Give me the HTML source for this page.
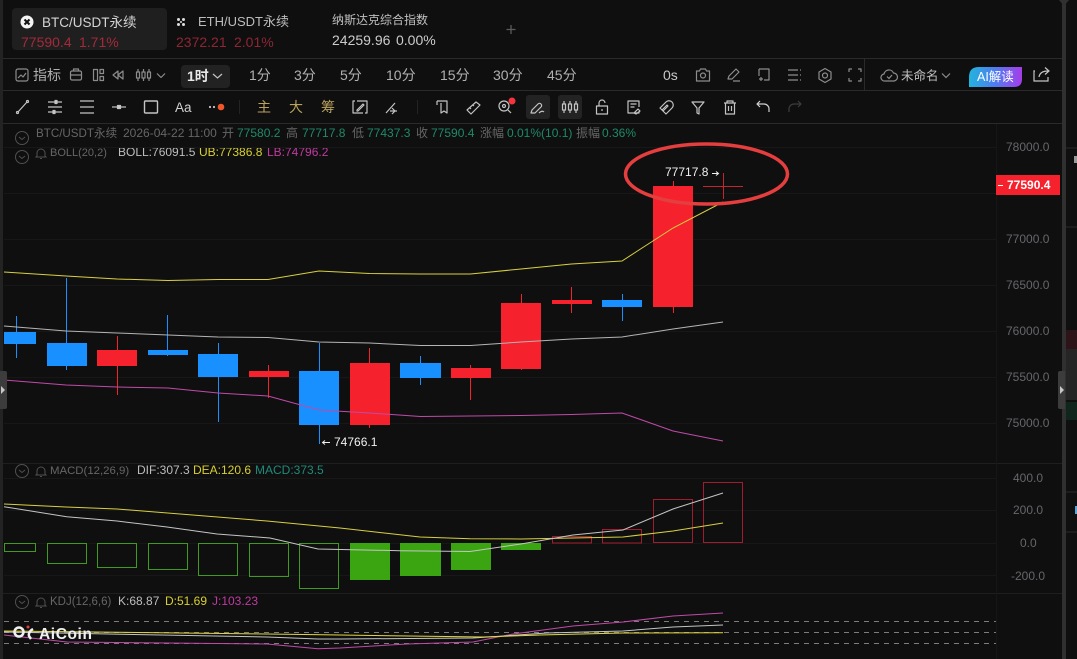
<!DOCTYPE html>
<html><head><meta charset="utf-8"><style>
html,body{margin:0;padding:0;background:#0f0f10;width:1077px;height:659px;overflow:hidden}
svg{display:block;font-family:"Liberation Sans","Noto Sans CJK SC",sans-serif}
.i{fill:none;stroke:#c4c4c4;stroke-width:1.2}
.r1{fill:none;stroke:#8c8c8c;stroke-width:1.2}
.sm{font-size:12px}
.g{fill:#666}.t{fill:#1f8a68}
.tb{font-size:14px;fill:#b0b0b0}
.ax{font-size:12px;fill:#66666b}
.ln{fill:none;stroke-width:1}
.bu{fill:#1890ff}.re{fill:#f5222d}
.wb{stroke:#1890ff;stroke-width:1}.wr{stroke:#f5222d;stroke-width:1}
.og{fill:none;stroke:#3f9a1e;stroke-width:1}
.or{fill:none;stroke:#a01c2e;stroke-width:1}
.sg{fill:#3aa510}
.gr{stroke:#171718;stroke-width:1}
.d{stroke:#7c7c7c;stroke-width:1;stroke-dasharray:5 5}
</style></head><body>
<svg width="1077" height="659" viewBox="0 0 1077 659" xmlns="http://www.w3.org/2000/svg">
<rect width="1077" height="659" fill="#0f0f10"/>
<rect x="0" y="0" width="3" height="659" fill="#232324"/>
<rect x="1062" y="0" width="4" height="659" fill="#303031"/>
<path d="M1059 0h10l-5 6z" fill="#303031"/>
<!-- right sliver -->
<path d="M1066 148h11M1066 227h11M1066 492h11M1066 532h11" stroke="#2a2a2b"/>
<rect x="1066" y="330" width="11" height="19" fill="#2c1418"/>
<rect x="1066" y="349" width="11" height="51" fill="#252526"/>
<rect x="1066" y="402" width="11" height="18" fill="#10261d"/>
<rect x="1074" y="156" width="3" height="7" fill="#999"/>
<rect x="1075" y="506" width="2" height="8" fill="#5aa4d8"/>
<!-- separators -->
<path d="M3 58.500H1062M3 90.500H1062M3 123.500H1062M864.500 58V90" stroke="#2a2a2b"/>
<path d="M3 463.500H1062M3 593.500H1062" stroke="#1f1f20"/>
<path d="M996.500 124V659" stroke="#161617"/>
<!-- tabs -->
<rect x="12" y="8" width="155" height="42" rx="4" fill="#1f1f20"/>
<circle cx="27" cy="22" r="6.500" fill="#f4f4f4"/>
<path d="M24.500 19.500l5 5M29.500 19.500l-5 5" stroke="#111" stroke-width="2"/>
<text x="42" y="27" font-size="13.500" fill="#d4d4d4">BTC/USDT永续</text>
<text x="21" y="47" font-size="14" fill="#a42a38">77590.4</text><text x="79" y="47" font-size="14" fill="#a42a38">1.71%</text>
<g fill="#ddd"><circle cx="178.500" cy="19.500" r="1.500"/><circle cx="183.500" cy="19.500" r="1.500"/><circle cx="178.500" cy="24.500" r="1.500"/><circle cx="183.500" cy="24.500" r="1.500"/><circle cx="181" cy="22" r="1"/></g>
<text x="198" y="26" font-size="13" fill="#bcbcbc">ETH/USDT永续</text>
<text x="176" y="47" font-size="14" fill="#8e2634">2372.21</text><text x="234" y="47" font-size="14" fill="#8e2634">2.01%</text>
<text x="332" y="24" font-size="12" fill="#c0c0c0">纳斯达克综合指数</text>
<text x="332" y="45" font-size="14" fill="#cccccc">24259.96</text><text x="396" y="45" font-size="14" fill="#cccccc">0.00%</text>
<path d="M511 25v9M506.500 29.500h9" stroke="#5c5c5c" stroke-width="1.300"/>
<!-- row 1 -->
<g class="r1" stroke-linejoin="round">
<rect x="16" y="69" width="12" height="12" rx="2"/><path d="M18 78l3-3 2 2 3-4"/>
<rect x="70.500" y="71" width="11" height="9" rx="1.500"/><path d="M73.500 71v-2h5v2M70.500 75h11"/>
<rect x="93.500" y="69.500" width="4" height="11"/><rect x="100" y="69.500" width="3.500" height="4"/><rect x="100" y="76.500" width="3.500" height="4"/>
<path d="M118 71l-5 4 5 4zM123 71l-5 4 5 4z"/>
<path d="M138 69v12M143.500 69v12M149 69v12"/><rect x="136.500" y="72" width="3" height="6" fill="#111"/><rect x="142" y="72" width="3" height="6" fill="#111"/><rect x="147.500" y="72" width="3" height="6" fill="#111"/>
<path d="M157 73.500l4 4 4-4"/>
</g>
<text x="33" y="80" font-size="14" fill="#b0b0b0">指标</text>
<rect x="181" y="65" width="49" height="23" rx="4" fill="#222223"/>
<text x="187" y="81" font-size="14" font-weight="bold" fill="#e8e8e8">1时</text>
<path class="i" d="M213 74l4.500 4 4.500-4"/>
<text x="249" y="80" class="tb">1分</text><text x="294" y="80" class="tb">3分</text><text x="340" y="80" class="tb">5分</text><text x="386" y="80" class="tb">10分</text><text x="440" y="80" class="tb">15分</text><text x="493" y="80" class="tb">30分</text><text x="547" y="80" class="tb">45分</text>
<text x="663" y="80" font-size="14" fill="#c8c8c8">0s</text>
<g class="r1" stroke-linejoin="round">
<path d="M696.500 71h3l1-2h5l1 2h3v10h-13z"/><circle cx="703" cy="75.500" r="2.500"/>
<path d="M728 79l1-3 7-7 3 3-7 7zM733 81h7"/>
<path d="M759 69h10v11h-5M759 69v7M759 79h4M761 77v4"/>
<path d="M788 70h10M788 75h10M788 80h10M800 70h1M800 75h1M800 80h1"/>
<path d="M825 68.500l6 3.500v7l-6 3.500-6-3.500v-7z"/><circle cx="825" cy="75.500" r="2.500"/>
<path d="M849 72v-3h3M858 69h3v3M861 78v3h-3M852 81h-3v-3"/>
</g>
<g class="r1"><path d="M885 81a3.500 3.500 0 0 1-1-7 5 5 0 0 1 9.500-1 4 4 0 0 1 0 8zM887 76.500l2 2 3-3.500"/></g>
<text x="901" y="80" font-size="12.500" fill="#c0c0c0">未命名</text>
<path class="r1" d="M942 73.500l4 4 4-4"/>
<defs><linearGradient id="ai" x1="0" x2="1" y1="0" y2="0"><stop offset="0" stop-color="#22b4dc"/><stop offset=".5" stop-color="#4f7cf0"/><stop offset="1" stop-color="#a63de8"/></linearGradient></defs>
<path d="M979 67h43v12q0 8-8 8h-45v-10q0-10 10-10z" fill="url(#ai)"/>
<text x="977" y="81" font-size="12.500" fill="#ffffff">AI解读</text>
<g class="i"><path d="M1035 71h-1v10h14v-4M1039 77q1-6 9-6M1045 67.500l4 3.500-4 3.500"/></g>
<!-- row 2 -->
<rect x="526" y="95" width="24" height="24" rx="3" fill="#232324"/>
<rect x="558" y="95" width="24" height="24" rx="3" fill="#232324"/>
<g class="i" stroke-linejoin="round">
<path d="M18 112l9-10"/><circle cx="17.500" cy="112.500" r="1"/><circle cx="27.500" cy="101.500" r="1"/>
<path d="M48 102h14M48 107h14M48 112h14"/><rect x="55" y="100.500" width="2" height="3" fill="#ccc"/><rect x="53" y="110.500" width="2" height="3" fill="#ccc"/>
<path d="M80 101h14M80 107h14M80 113h14"/>
<path d="M112 107h14"/><rect x="117.500" y="105.500" width="3" height="3" fill="#ccc"/>
<rect x="144.500" y="101" width="13" height="12" rx="1" stroke-width="1.400"/>
<circle cx="210" cy="107" r=".5"/><circle cx="214" cy="107" r=".5"/>
<path d="M355 101h-2v12h2M365 101h2v12h-2M355 113h8M357 101h8M357 110l6-6 1 1-6 6h-1z"/>
<path d="M386 113l9-10M390 111h7M392 108l3 3-3 3"/>
<path d="M437 101h10v12l-3-2-3 2v-10M437 101v4"/>
<path d="M467 110l9-8 4 3-9 9zM470 108l1 1M473 105l1 1"/>
<circle cx="504" cy="106" r="5"/><circle cx="504" cy="106" r="1.500"/><path d="M508 110l3 3"/>
<path d="M531 113l1-3 6-6a2 2 0 0 1 3 3l-6 6zM539 113q3-3 5-1"/>
<path d="M564 101v12M570 101v12M576 101v12"/><rect x="562.500" y="104" width="3" height="6" fill="#222"/><rect x="568.500" y="104" width="3" height="6" fill="#222"/><rect x="574.500" y="104" width="3" height="6" fill="#222"/>
<rect x="596.500" y="106" width="11" height="8"/><path d="M599 106v-3a3 3 0 0 1 6 0"/><path d="M602 109v2"/>
<path d="M639 112v1h-11v-12h11v6M630.500 104h6M630.500 107h4M634 113l4-4 2 2-4 3z"/>
<path d="M660 108l6-6a4 4 0 0 1 6 6l-6 6-3-3 5-5-1-1-5 5zM662 110l2 2"/>
<path d="M692 102h12l-5 6v6l-2-1v-5z"/>
<path d="M724 103h12M727 103v-2h6v2M725.500 103v11h9v-11M728.500 106v5M731.500 106v5"/>
<path d="M757 104h7a5 5 0 0 1 5 5v3M760 101l-3 3 3 3" stroke="#d0d0d0"/>
</g>
<path d="M801 104h-7a5 5 0 0 0-5 5v3M798 101l3 3-3 3" fill="none" stroke="#3c3c3d" stroke-width="1.200"/>
<text x="175" y="112" font-size="13.500" fill="#d0d0d0">Aa</text>
<circle cx="221" cy="107" r="3.300" fill="#f0562a"/>
<path d="M239.500 100v14M417.500 100v14" stroke="#232324"/>
<text x="257" y="112" font-size="14" fill="#b8a25c">主</text>
<text x="289" y="112" font-size="14" fill="#b8a25c">大</text>
<text x="321" y="112" font-size="14" fill="#b8a25c">筹</text>
<circle cx="512" cy="101" r="3.500" fill="#f5343e"/>
<!-- info lines -->
<g fill="none" stroke="#505050" stroke-width="1">
<circle cx="22" cy="138" r="6.500"/><path d="M19 137l3 2.500 3-2.500"/>
<circle cx="22" cy="157" r="6.500"/><path d="M19 156l3 2.500 3-2.500"/>
<circle cx="22" cy="471" r="6.500"/><path d="M19 470l3 2.500 3-2.500"/>
<circle cx="22" cy="602" r="6.500"/><path d="M19 601l3 2.500 3-2.500"/>
<path d="M37 156v-3a4 4 0 0 1 8 0v3l1 1h-10zM40 158.500h2"/>
<path d="M37 474v-3a4 4 0 0 1 8 0v3l1 1h-10zM40 476.500h2"/>
<path d="M37 605v-3a4 4 0 0 1 8 0v3l1 1h-10zM40 607.500h2"/>
</g>
<g class="sm">
<text x="36" y="137" font-size="11.600" class="g">BTC/USDT永续</text>
<text x="123" y="137" class="g">2026-04-22 11:00</text>
<text x="222" y="137" class="g">开</text><text x="237" y="137" class="t">77580.2</text>
<text x="286" y="137" class="g">高</text><text x="302" y="137" class="t">77717.8</text>
<text x="352" y="137" class="g">低</text><text x="367" y="137" class="t">77437.3</text>
<text x="416" y="137" class="g">收</text><text x="431" y="137" class="t">77590.4</text>
<text x="480" y="137" class="g">涨幅</text><text x="507" y="137" class="t">0.01%(10.1)</text>
<text x="576" y="137" class="g">振幅</text><text x="602" y="137" class="t">0.36%</text>
<text x="50" y="156" font-size="11" class="g">BOLL(20,2)</text>
<text x="118" y="156" fill="#bdbdbd">BOLL:76091.5</text>
<text x="199" y="156" fill="#d8d030">UB:77386.8</text>
<text x="267" y="156" fill="#c03aa0">LB:74796.2</text>
<text x="50" y="474" font-size="11.400" class="g">MACD(12,26,9)</text>
<text x="137" y="474" fill="#bdbdbd">DIF:307.3</text>
<text x="193" y="474" fill="#d8d030">DEA:120.6</text>
<text x="255" y="474" fill="#1f8a78">MACD:373.5</text>
<text x="50" y="605" font-size="11.500" class="g">KDJ(12,6,6)</text>
<text x="118" y="605" fill="#bdbdbd">K:68.87</text>
<text x="165" y="605" fill="#d8d030">D:51.69</text>
<text x="212" y="605" fill="#c03aa0">J:103.23</text>
</g>
<!-- grid -->
<path class="gr" d="M4 147.500H996M4 193.500H996M4 239.500H996M4 285.500H996M4 331.500H996M4 377.500H996M4 423.500H996M4 478.500H996M4 510.500H996M4 543.500H996M4 575.500H996"/>
<!-- axis -->
<g class="ax">
<text x="1006" y="151">78000.0</text>
<text x="1006" y="243">77000.0</text>
<text x="1006" y="289">76500.0</text>
<text x="1006" y="335">76000.0</text>
<text x="1006" y="381">75500.0</text>
<text x="1006" y="427">75000.0</text>
<text x="1013" y="482">400.0</text>
<text x="1013" y="514">200.0</text>
<text x="1020" y="547">0.0</text>
<text x="1011" y="580">-200.0</text>
</g>
<!-- wicks -->
<path class="wb" d="M16.500 316V358M66.500 278V370M167.500 315V356M218.500 343V422M319.500 343V444M420.500 356V385M622.500 294V321"/>
<path class="wr" d="M117.500 336V395M268.500 365V398M369.500 348V428M470.500 365V400M521.500 294V370M571.500 287V313M673.500 181V313"/>
<path d="M723.500 173V199M703 186.500H743" stroke="#c4252e" stroke-width="1"/>
<!-- bodies -->
<rect class="bu" x="4" y="332" width="32" height="12"/>
<rect class="bu" x="47" y="343" width="40" height="23"/>
<rect class="re" x="97" y="350" width="40" height="16"/>
<rect class="bu" x="148" y="350" width="40" height="5"/>
<rect class="bu" x="198" y="354" width="40" height="23"/>
<rect class="re" x="249" y="371" width="40" height="6"/>
<rect class="bu" x="299" y="371" width="40" height="54"/>
<rect class="re" x="350" y="363" width="40" height="62"/>
<rect class="bu" x="400" y="363" width="41" height="15"/>
<rect class="re" x="451" y="368" width="40" height="10"/>
<rect class="re" x="501" y="303" width="40" height="66"/>
<rect class="re" x="552" y="300" width="40" height="4"/>
<rect class="bu" x="602" y="300" width="40" height="7"/>
<rect class="re" x="653" y="186" width="40" height="121"/>
<!-- BOLL -->
<polyline class="ln" stroke="#d8d040" points="4,272 66,276 117,279 168,280.500 218,279.500 268,279.500 319,271 369.500,273.500 420,274 470.500,274 521,269 571.500,264 622,261 673,228 723,202"/>
<polyline class="ln" stroke="#b5b5b5" points="4,326 66,331 117,333 168,335 218,337 268,337.500 319,342 369.500,343 420.500,345.500 470.500,345.500 521,342 571.500,339 622,337 673,329 723,322"/>
<polyline class="ln" stroke="#c04aa8" points="4,380 66,385 117,387 168,388 218,393 268,396 319,410 369.500,413 420.500,416.500 470.500,416 521,415.500 571.500,414.500 622,413 673,431 723,441"/>
<!-- labels -->
<text x="665" y="176" font-size="12" fill="#f0f0f0">77717.8</text>
<path d="M712 173.500h6M716 171.500l2.500 2-2.500 2" fill="none" stroke="#eee"/>
<path d="M323 442.500h7M325 440.500l-2.500 2 2.500 2" fill="none" stroke="#eee"/>
<text x="334" y="446" font-size="12" fill="#f0f0f0">74766.1</text>
<ellipse cx="706.500" cy="174" rx="81" ry="30" fill="none" stroke="#e53e3e" stroke-width="3.500"/>
<rect x="996" y="175" width="64" height="20" fill="#f5222d"/>
<path d="M998 185.500h5" stroke="#fff"/>
<text x="1007" y="189" font-size="12" font-weight="bold" fill="#fff">77590.4</text>
<!-- handles -->
<path d="M0 371h5a2 2 0 0 1 2 2v34a2 2 0 0 1-2 2H0z" fill="#3c3c3d"/>
<path d="M1 386l4 4-4 4z" fill="#c8c8c8"/>
<path d="M1060 371h5v38h-5a2 2 0 0 1-2-2v-34a2 2 0 0 1 2-2z" fill="#3c3c3d"/>
<path d="M1060 386l4 4-4 4z" fill="#c8c8c8"/>
<!-- MACD -->
<rect class="og" x="4.500" y="543.500" width="31" height="8"/>
<rect class="og" x="47.500" y="543.500" width="39" height="20"/>
<rect class="og" x="97.500" y="543.500" width="39" height="24"/>
<rect class="og" x="148.500" y="543.500" width="39" height="26"/>
<rect class="og" x="198.500" y="543.500" width="39" height="32"/>
<rect class="og" x="249.500" y="543.500" width="39" height="33"/>
<rect class="og" x="299.500" y="543.500" width="39" height="45"/>
<rect class="sg" x="350" y="543" width="40" height="37"/>
<rect class="sg" x="400" y="543" width="41" height="33"/>
<rect class="sg" x="451" y="543" width="40" height="27"/>
<rect class="sg" x="501" y="543" width="40" height="7"/>
<rect class="or" x="552.500" y="536.500" width="39" height="6.500"/>
<rect class="or" x="602.500" y="529.500" width="39" height="13.500"/>
<rect class="or" x="653.500" y="499.500" width="39" height="43"/>
<rect class="or" x="703.500" y="482.500" width="39" height="60"/>
<polyline class="ln" stroke="#d8d040" points="4,504 66,507 117,509 267,521 340,528 420,537 470,538.700 521,539 573,538 623,537 673,531 723,523"/>
<polyline class="ln" stroke="#c4c4c4" points="4,506.700 66.700,516.700 117,521 167,527 217,534 270,538 318,549 400,550.700 470,551.500 521,544 573,535 623,530 673,509 723,493"/>
<!-- KDJ -->
<path class="d" d="M4 621.500H996M4 632.500H996M4 643.500H996"/>
<polyline class="ln" stroke="#c04aa8" points="4,635 67,642 167,643 267,644 318,648.700 340,648 407,644 473,642 513,634 573,626 623,622 673,616 723,613"/>
<polyline class="ln" stroke="#c4c4c4" points="4,632 267,637 318,639 340,639 473,638 547,633 623,631 673,627 723,625"/>
<polyline class="ln" stroke="#e0d840" points="4,631 267,634 340,635 483,637 540,635 623,633 723,632.700"/>
<!-- watermark -->
<circle cx="19" cy="632" r="4.500" fill="none" stroke="#f0f0f0" stroke-width="2.500"/>
<path d="M33 629q-5 3-4 7l2 3" fill="none" stroke="#f0f0f0" stroke-width="2.500"/>
<circle cx="28" cy="627" r="1.500" fill="#e04040"/>
<text x="39" y="639" font-size="15.500" font-weight="bold" fill="#f0f0f0" letter-spacing=".6">AiCoin</text>
</svg>
</body></html>
